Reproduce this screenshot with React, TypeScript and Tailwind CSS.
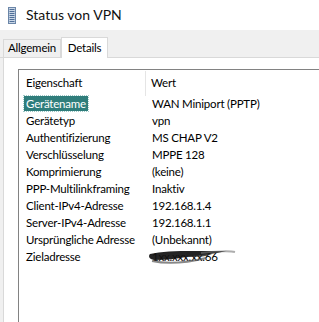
import React from "react";

const rows: [string, string][] = [
  ["Gerätename", "WAN Miniport (PPTP)"],
  ["Gerätetyp", "vpn"],
  ["Authentifizierung", "MS CHAP V2"],
  ["Verschlüsselung", "MPPE 128"],
  ["Komprimierung", "(keine)"],
  ["PPP-Multilinkframing", "Inaktiv"],
  ["Client-IPv4-Adresse", "192.168.1.4"],
  ["Server-IPv4-Adresse", "192.168.1.1"],
  ["Ursprüngliche Adresse", "(Unbekannt)"],
  ["Zieladresse", "1xx.xxx.xx.66"],
];

function Icon() {
  return (
    <svg width="8" height="17" viewBox="0 0 8 17">
      <rect x="0.5" y="0.5" width="7" height="16" fill="#c9d6e6" stroke="#6b86a8" />
      {[2, 4, 6, 8, 10, 12, 14].map((y) => (
        <rect key={y} x="1.5" y={y} width="5" height="1" fill="#4f6f98" />
      ))}
    </svg>
  );
}

export default function App() {
  return (
    <div
      className="w-[319px] h-[322px] overflow-hidden bg-white text-black flex flex-col whitespace-nowrap"
      style={{ fontFamily: 'Lato, "Segoe UI", sans-serif' }}
    >
      <div className="h-[30px] flex items-center pl-[8px] gap-[10px] shrink-0">
        <Icon />
        <span className="text-[14px] leading-none text-[#111]">Status von VPN</span>
      </div>
      <div className="h-[28px] bg-[#f0f0f0] shrink-0 flex items-end pl-[3px] border-b border-[#d9d9d9] relative">
        <div className="h-[18px] w-[58px] border border-b-0 border-[#d9d9d9] bg-[#f0f0f0] text-[11.5px] tracking-[-0.2px] flex items-center justify-center leading-none pb-[1px]">
          Allgemein
        </div>
        <div className="h-[21px] w-[47px] -mb-px border border-b-0 border-[#d9d9d9] bg-white text-[11.5px] tracking-[-0.2px] flex items-start justify-center leading-none pt-[4px] z-10">
          Details
        </div>
      </div>
      <div className="flex-1 bg-[#f0f0f0] pl-[3px]">
        <div className="h-full bg-white border-l border-[#d9d9d9] pl-[14px] pt-[11px]">
          <div className="h-[300px] border-l border-t border-[#828282] text-[11.5px] tracking-[-0.2px] leading-none">
            <div className="h-[25px] flex items-center">
              <div className="w-[127px] pl-[7px] h-full flex items-center border-r border-[#e5e5e5] mt-[1px]">Eigenschaft</div>
              <div className="pl-[5px]">Wert</div>
            </div>
            {rows.map(([k, v], i) => (
              <div key={k} className="h-[17px] flex items-center">
                <div className="w-[127px] pl-[5px] flex items-center">
                  <span
                    className={
                      i === 0
                        ? "bg-[#2f7d7b] text-white px-[2px] h-[15px] flex items-center outline-1 outline-dotted outline-[#9fc9c7]"
                        : "px-[2px]"
                    }
                  >
                    {k}
                  </span>
                </div>
                <div className="pl-[6px] relative">
                  {v}
                  {i === 9 && (
                    <svg
                      className="absolute left-0 top-[-6px]"
                      width="90"
                      height="24"
                      viewBox="0 0 90 24"
                    >
                      <path
                        d="M4 9 C 20 5, 45 6, 80 6 C 70 9, 50 10, 40 12 C 30 14, 20 15, 8 15 C 3 14, 2 11, 4 9 Z"
                        fill="#111"
                        opacity="0.92"
                      />
                      <path
                        d="M40 8 C 50 7, 60 8, 66 9 C 60 12, 50 12, 40 12 Z"
                        fill="#222"
                        opacity="0.8"
                      />
                      <path
                        d="M6 16 C 20 19, 40 18, 60 13"
                        stroke="#555"
                        strokeWidth="2"
                        fill="none"
                        opacity="0.7"
                      />
                      <path
                        d="M55 8 C 70 6, 85 6, 89 7"
                        stroke="#777"
                        strokeWidth="2"
                        fill="none"
                        opacity="0.6"
                      />
                    </svg>
                  )}
                </div>
              </div>
            ))}
          </div>
        </div>
      </div>
    </div>
  );
}
